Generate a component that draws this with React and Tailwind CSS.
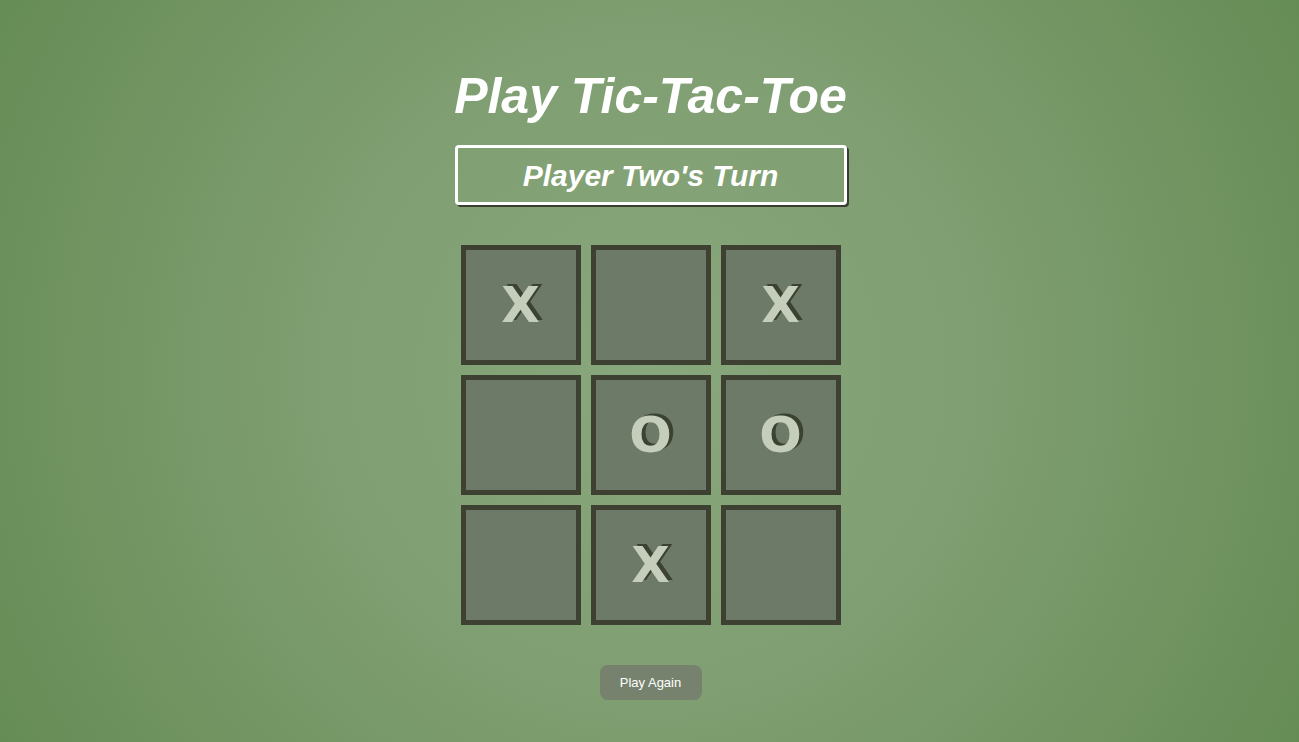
import React, { useState } from 'react';

const initial = ['X', '', 'X', '', 'O', 'O', '', 'X', ''];

export default function App() {
  const [board, setBoard] = useState(initial);

  return (
    <div className="min-h-screen w-full pl-[2px] flex flex-col items-center bg-[radial-gradient(circle_at_center,#88a77c_0%,#7f9e71_45%,#668c55_100%)] font-['Liberation_Sans',Arial,sans-serif]">
      <h1 className="mt-[66px] text-[50px] leading-[60px] font-bold italic text-white">Play Tic-Tac-Toe</h1>
      <div className="mt-[19px] w-[392px] h-[60px] border-[3px] border-white rounded-[4px] shadow-[2px_2px_0_#3a3d30] flex items-center justify-center">
        <span className="text-[30px] font-bold italic text-white">Player Two's Turn</span>
      </div>
      <div className="mt-[40px] grid grid-cols-3 gap-[10px]">
        {board.map((v, i) => (
          <button
            key={i}
            type="button"
            onClick={() => {
              if (v) return;
              const next = [...board];
              next[i] = 'O';
              setBoard(next);
            }}
            className="w-[120px] h-[120px] border-[5px] border-[#3e4132] bg-[#6d7a68] flex items-center justify-center font-['DejaVu_Sans',sans-serif] font-bold text-[50px] leading-none text-[#c5ceba] [text-shadow:4px_-2px_0_#3c4232]"
          >
            {v}
          </button>
        ))}
      </div>
      <button
        type="button"
        onClick={() => setBoard(Array(9).fill(''))}
        className="mt-[40px] w-[102px] h-[35px] rounded-[8px] bg-[#76826e] text-white text-[13px]"
      >
        Play Again
      </button>
    </div>
  );
}
